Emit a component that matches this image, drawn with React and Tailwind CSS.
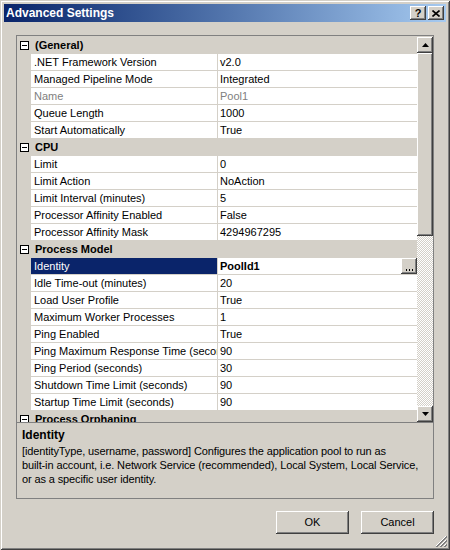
import React from "react";

const sections = [
  {
    title: "(General)",
    rows: [
      [".NET Framework Version", "v2.0"],
      ["Managed Pipeline Mode", "Integrated"],
      ["Name", "Pool1", "readonly"],
      ["Queue Length", "1000"],
      ["Start Automatically", "True"],
    ],
  },
  {
    title: "CPU",
    rows: [
      ["Limit", "0"],
      ["Limit Action", "NoAction"],
      ["Limit Interval (minutes)", "5"],
      ["Processor Affinity Enabled", "False"],
      ["Processor Affinity Mask", "4294967295"],
    ],
  },
  {
    title: "Process Model",
    rows: [
      ["Identity", "PoolId1", "selected"],
      ["Idle Time-out (minutes)", "20"],
      ["Load User Profile", "True"],
      ["Maximum Worker Processes", "1"],
      ["Ping Enabled", "True"],
      ["Ping Maximum Response Time (seconds)", "90"],
      ["Ping Period (seconds)", "30"],
      ["Shutdown Time Limit (seconds)", "90"],
      ["Startup Time Limit (seconds)", "90"],
    ],
  },
  {
    title: "Process Orphaning",
    rows: [
      ["Enabled", "False"],
      ["Executable", ""],
    ],
  },
];

const raised =
  "bg-[#d4d0c8] shadow-[inset_-1px_-1px_0_#404040,inset_1px_1px_0_#ffffff,inset_-2px_-2px_0_#808080,inset_2px_2px_0_#d4d0c8]";

const CategoryRow = ({ title }) => (
  <div className="flex h-[17px] shrink-0 items-center bg-[#d4d0c8]">
    <div className="flex w-[14px] justify-center">
      <div className="relative h-[9px] w-[9px] border border-black bg-white">
        <div className="absolute left-[1px] top-[3px] h-[1px] w-[5px] bg-black" />
      </div>
    </div>
    <span className="pl-[4px] font-bold">{title}</span>
  </div>
);

const PropertyRow = ({ name, value, kind }) => {
  const selected = kind === "selected";
  const readonly = kind === "readonly";
  return (
    <div className="flex h-[17px] shrink-0 bg-[#d4d0c8]">
      <div className="w-[14px] shrink-0" />
      <div
        className={`w-[187px] shrink-0 overflow-hidden whitespace-nowrap border-b border-r border-[#d4d0c8] pl-[3px] leading-[16px] ${
          selected ? "bg-[#0a246a] text-white" : "bg-white"
        } ${readonly ? "text-[#808080]" : ""}`}
      >
        {name}
      </div>
      <div
        className={`relative flex w-[199px] shrink-0 overflow-hidden whitespace-nowrap border-b border-[#d4d0c8] bg-white pl-[2px] leading-[16px] ${
          readonly ? "text-[#808080]" : ""
        } ${selected ? "font-bold" : ""}`}
      >
        {value}
        {selected && (
          <div
            className={`absolute right-0 top-0 flex h-[16px] w-[16px] items-end justify-center pb-[3px] ${raised}`}
          >
            <div className="flex gap-[2px]">
              <div className="h-[2px] w-[1px] bg-black" />
              <div className="h-[2px] w-[1px] bg-black" />
              <div className="h-[2px] w-[1px] bg-black" />
            </div>
          </div>
        )}
      </div>
    </div>
  );
};

const Arrow = ({ down }) => (
  <svg width="7" height="4" viewBox="0 0 7 4">
    {down ? (
      <polygon points="0,0 7,0 3.5,4" fill="#000" />
    ) : (
      <polygon points="3.5,0 7,4 0,4" fill="#000" />
    )}
  </svg>
);

const Scrollbar = () => (
  <div className="flex w-[16px] shrink-0 flex-col">
    <div className={`flex h-[16px] items-center justify-center ${raised}`}>
      <Arrow />
    </div>
    <div className={`h-[183px] ${raised}`} />
    <div className="flex-1 bg-[image:repeating-conic-gradient(#ffffff_0_25%,#d4d0c8_0_50%)] bg-[length:2px_2px]" />
    <div className={`flex h-[16px] items-center justify-center ${raised}`}>
      <Arrow down />
    </div>
  </div>
);

const Button = ({ children }) => (
  <button className={`flex h-[23px] w-[73px] items-center justify-center ${raised}`}>
    {children}
  </button>
);

export default function App() {
  return (
    <div
      className="relative flex h-[550px] w-[450px] flex-col bg-[#d4d0c8] p-[4px] text-[11px] text-black shadow-[inset_1px_1px_0_#d4d0c8,inset_-1px_-1px_0_#404040,inset_2px_2px_0_#ffffff,inset_-2px_-2px_0_#808080]"
      style={{ fontFamily: '"Liberation Sans", Arial, sans-serif' }}
    >
      {/* Title bar */}
      <div className="flex h-[18px] shrink-0 items-center bg-gradient-to-r from-[#0a246a] to-[#a6caf0] pl-[2px] pr-[2px]">
        <span className="flex-1 text-[12px] font-bold text-white">Advanced Settings</span>
        <div className="flex gap-[2px]">
          <div className={`flex h-[14px] w-[16px] items-center justify-center text-[11px] font-bold leading-none ${raised}`}>
            ?
          </div>
          <div className={`flex h-[14px] w-[16px] items-center justify-center ${raised}`}>
            <svg width="8" height="7" viewBox="0 0 8 7">
              <path d="M0.5 0.5 L7.5 6.5 M7.5 0.5 L0.5 6.5" stroke="#000" strokeWidth="1.6" />
            </svg>
          </div>
        </div>
      </div>

      <div className="ml-[12px] mt-[13px] flex w-[418px] flex-col">
        {/* Property grid + description */}
        <div className="flex h-[464px] flex-col border border-[#808080]">
          <div className="flex h-[386px] shrink-0 bg-[#d4d0c8] pt-[1px]">
            <div className="flex w-[400px] flex-col overflow-hidden">
              {sections.map((s) => (
                <React.Fragment key={s.title}>
                  <CategoryRow title={s.title} />
                  {s.rows.map(([n, v, k]) => (
                    <PropertyRow key={n} name={n} value={v} kind={k} />
                  ))}
                </React.Fragment>
              ))}
            </div>
            <Scrollbar />
          </div>
          <div className="h-[1px] shrink-0 bg-[#808080]" />
          <div className="flex flex-1 flex-col px-[5px] pt-[5px] leading-[14px]">
            <div className="h-[16px] text-[12px] font-bold leading-[14px]">Identity</div>
            <div className="whitespace-nowrap tracking-[-0.12px]">
              [identityType, username, password] Configures the application pool to run as
            </div>
            <div className="whitespace-nowrap tracking-[-0.12px]">
              built-in account, i.e. Network Service (recommended), Local System, Local Service,
            </div>
            <div className="whitespace-nowrap tracking-[-0.12px]">or as a specific user identity.</div>
          </div>
        </div>

        {/* Buttons */}
        <div className="mt-[12px] flex justify-end gap-[12px]">
          <Button>OK</Button>
          <Button>Cancel</Button>
        </div>
      </div>

      {/* Resize grip */}
      <svg className="absolute bottom-[3px] right-[3px]" width="12" height="12" viewBox="0 0 12 12">
        <path d="M11 1 L1 11 M11 5 L5 11 M11 9 L9 11" stroke="#ffffff" strokeWidth="1" />
        <path d="M12 1 L1 12 M12 2 L2 12 M12 5 L5 12 M12 6 L6 12 M12 9 L9 12 M12 10 L10 12" stroke="#808080" strokeWidth="1" />
      </svg>
    </div>
  );
}
